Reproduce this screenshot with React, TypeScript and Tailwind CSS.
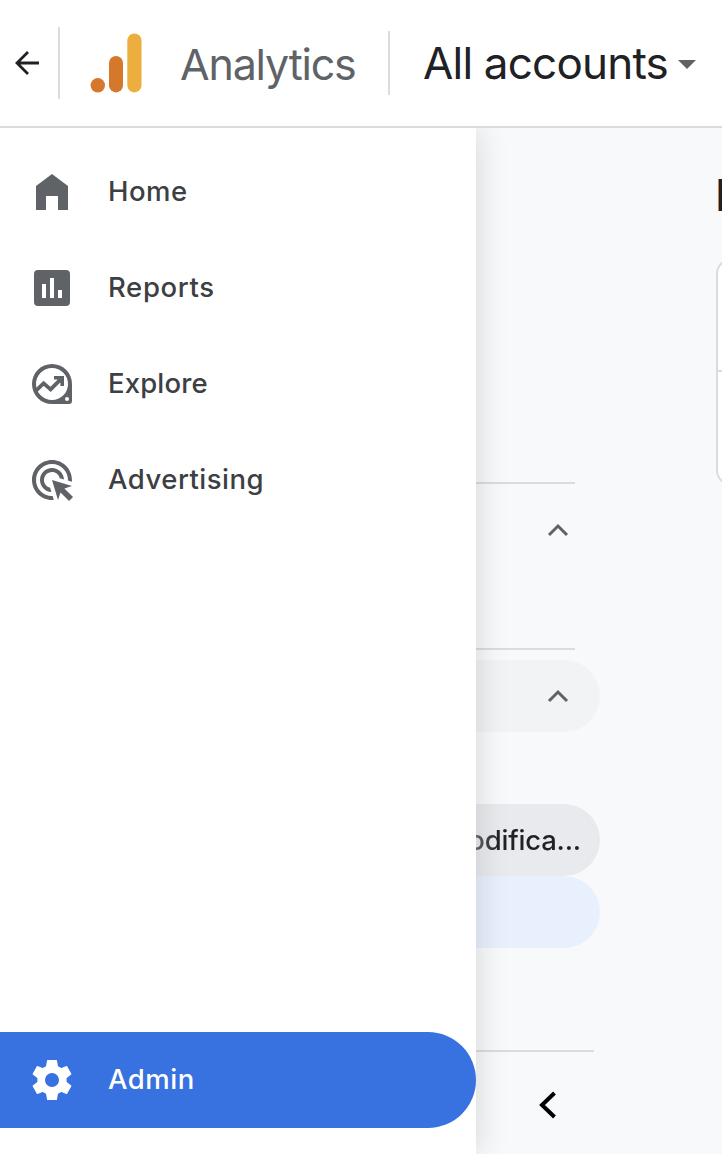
import type { ReactNode } from "react";

function NavItem({ icon, label, spacing }: { icon: ReactNode; label: string; spacing: string }) {
  return (
    <a className="flex h-24 items-center pl-7">
      <svg className="size-12 shrink-0 fill-[#5f6368]" viewBox="0 0 24 24">
        {icon}
      </svg>
      <span className={`ml-8 text-[27.5px] leading-none font-medium whitespace-nowrap text-[#3c4043] ${spacing}`}>{label}</span>
    </a>
  );
}

function ChevronUp() {
  return (
    <svg className="-mt-px h-3.5 w-6 shrink-0" viewBox="0 0 24 14" fill="none" stroke="#5f6368" strokeWidth="3">
      <path d="M3 12 12 3l9 9" />
    </svg>
  );
}

function Header() {
  return (
    <header className="relative z-20 flex h-32 shrink-0 items-center border-b-2 border-[#dadce0] bg-white">
      <svg className="ml-3.5 h-7 w-[26px] shrink-0" viewBox="0 0 26 28" fill="none" stroke="#202124" strokeWidth="2.8">
        <path d="M25 14H3M14 3 3 14l11 11" />
      </svg>
      <div className="ml-[18px] h-[72px] w-0.5 shrink-0 bg-[#dadce0]" />
      <svg className="ml-[30px] h-[60px] w-[52px] shrink-0" viewBox="0 0 52 60">
        <circle cx="7.8" cy="52.3" r="7.2" fill="#d5782c" />
        <rect x="19" y="23" width="14" height="36.4" rx="7" fill="#d5782c" />
        <rect x="37.3" y="0.4" width="14.2" height="59" rx="7.1" fill="#ecae3e" />
      </svg>
      <span className="ml-[38px] w-[208px] shrink-0 pt-0.5 text-[43px] leading-none tracking-[-1.2px] whitespace-nowrap text-[#5f6368]">
        Analytics
      </span>
      <div className="h-16 w-0.5 shrink-0 bg-[#dadce0]" />
      <span className="ml-[33px] w-[255px] shrink-0 text-[44px] leading-none tracking-[-0.8px] whitespace-nowrap text-[#202124]">
        All accounts
      </span>
      <svg className="mt-0.5 h-[9px] w-[18px] shrink-0" viewBox="0 0 18 9" fill="#5f6368">
        <path d="M0 0h18L9 9z" />
      </svg>
    </header>
  );
}

function Sidebar() {
  return (
    <nav className="relative z-10 flex w-[476px] shrink-0 flex-col justify-between bg-white pt-4 pb-[26px] shadow-[0_0_32px_rgba(0,0,0,0.15)]">
      <div>
        <NavItem label="Home" spacing="tracking-[0.5px]" icon={<path d="M4 9l8-6 8 6v12h-5v-7H9v7H4z" />} />
        <NavItem
          label="Reports"
          spacing="tracking-[0.65px]"
          icon={
            <path
              fillRule="evenodd"
              d="M5 3h14a2 2 0 0 1 2 2v14a2 2 0 0 1-2 2H5a2 2 0 0 1-2-2V5a2 2 0 0 1 2-2zM7 10v7h2v-7zm4-3v10h2V7zm4 6v4h2v-4z"
            />
          }
        />
        <NavItem
          label="Explore"
          spacing="tracking-[0.15px]"
          icon={
            <>
              <path
                fillRule="evenodd"
                d="M12 2a10 10 0 0 1 10 10v8.500a1.500 1.500 0 0 1-1.500 1.500H12a10 10 0 0 1 0-20zm0 2a8 8 0 1 0 0 16 8 8 0 0 0 0-16zm7.500 14.500a1 1 0 1 0 0 2 1 1 0 0 0 0-2z"
              />
              <path d="M4 15.300 7.800 11.700 11.300 14.700 16.300 9.700" fill="none" stroke="#5f6368" strokeWidth="1.900" />
              <path d="M13 8h5v5h-1.800v-1.600L14.600 9.800H13z" />
            </>
          }
        />
        <NavItem
          label="Advertising"
          spacing="tracking-[0.5px]"
          icon={
            <path d="M11.71 17.99C8.53 17.84 6 15.22 6 12c0-3.31 2.69-6 6-6 3.22 0 5.84 2.53 5.99 5.71l-2.1-.63C15.480 9.310 13.890 8 12 8c-2.210 0-4 1.790-4 4 0 1.890 1.310 3.480 3.080 3.890l.63 2.100zM22 12c0 .3-.01.6-.04.9l-1.970-.59c.01-.1.01-.21.01-.31 0-4.420-3.580-8-8-8s-8 3.580-8 8 3.580 8 8 8c.1 0 .21 0 .31-.01l.59 1.970c-.3.03-.6.04-.9.04-5.520 0-10-4.480-10-10S6.480 2 12 2s10 4.480 10 10zm-3.770 4.260L22 15l-10-3 3 10 1.260-3.770 4.270 4.270 1.980-1.980-4.280-4.260z" />
          }
        />
      </div>
      <a className="flex h-24 items-center rounded-r-full bg-[#3871e0] pl-7">
        <svg className="size-12 shrink-0 fill-white" viewBox="0 0 24 24">
          <path
            fillRule="evenodd"
            stroke="#fff"
            strokeWidth="0.6"
            strokeLinejoin="round"
            d="M9.800 2.300h4.400l.5 3 1.900 1.100 2.700-1.100 2.100 3.700-2.400 1.900v2.200l2.400 1.900-2.100 3.700-2.700-1.100-1.900 1.100-.5 3H9.800l-.5-3-1.900-1.100-2.700 1.100L2.600 15 5 13.100v-2.200L2.600 9l2.100-3.700 2.700 1.100 1.900-1.100zM12 8.200a3.800 3.800 0 1 0 0 7.600 3.800 3.800 0 0 0 0-7.600z"
          />
        </svg>
        <span className="ml-8 text-[27.5px] leading-none font-medium tracking-[0.5px] whitespace-nowrap text-white">Admin</span>
      </a>
    </nav>
  );
}

function SettingsColumn() {
  return (
    <div className="flex w-[124px] shrink-0 flex-col pt-[354px]">
      <div className="h-0.5 w-[99px] bg-[#dadce0]" />
      <div className="mt-2.5 flex h-[72px] items-center justify-end pr-[30px]">
        <ChevronUp />
      </div>
      <div className="mt-[82px] h-0.5 w-[99px] bg-[#dadce0]" />
      <div className="mt-2.5 flex h-[72px] items-center justify-end rounded-r-full bg-[#f1f3f4] pr-[30px]">
        <ChevronUp />
      </div>
      <div className="mt-[72px] flex h-[72px] items-center justify-end overflow-hidden rounded-r-full bg-[#e8eaed] pr-[19px]">
        <span className="bg-linear-to-r from-[#909295] from-15% to-[#202124] to-40% bg-clip-text text-[27.5px] leading-9 font-medium tracking-[-0.2px] whitespace-nowrap text-transparent">
          modifica...
        </span>
      </div>
      <div className="h-[72px] rounded-r-full bg-[#e8f0fe]" />
      <div className="mt-[102px] h-0.5 w-[118px] bg-[#dadce0]" />
      <svg className="mt-[39px] ml-[62px] h-7 w-5" viewBox="0 0 20 28" fill="none" stroke="#000" strokeWidth="4">
        <path d="M16.500 2 4 14l12.500 12" />
      </svg>
    </div>
  );
}

function ContentEdge() {
  return (
    <main className="min-w-0 flex-1 overflow-hidden pt-[45px] pl-[116px]">
      <h1 className="-ml-px text-[44px] leading-[44px] font-medium whitespace-nowrap text-[#202124]">P</h1>
      <div className="mt-[41px] h-[228px] w-80 rounded-2xl border-2 border-[#dadce0] bg-white">
        <div className="h-[112px] border-b-2 border-[#dadce0]" />
      </div>
    </main>
  );
}

export default function App() {
  return (
    <div className="flex h-[1154px] w-[722px] flex-col overflow-hidden bg-[#f8f9fb] font-['Inter',sans-serif]">
      <Header />
      <div className="flex min-h-0 flex-1">
        <Sidebar />
        <SettingsColumn />
        <ContentEdge />
      </div>
    </div>
  );
}
